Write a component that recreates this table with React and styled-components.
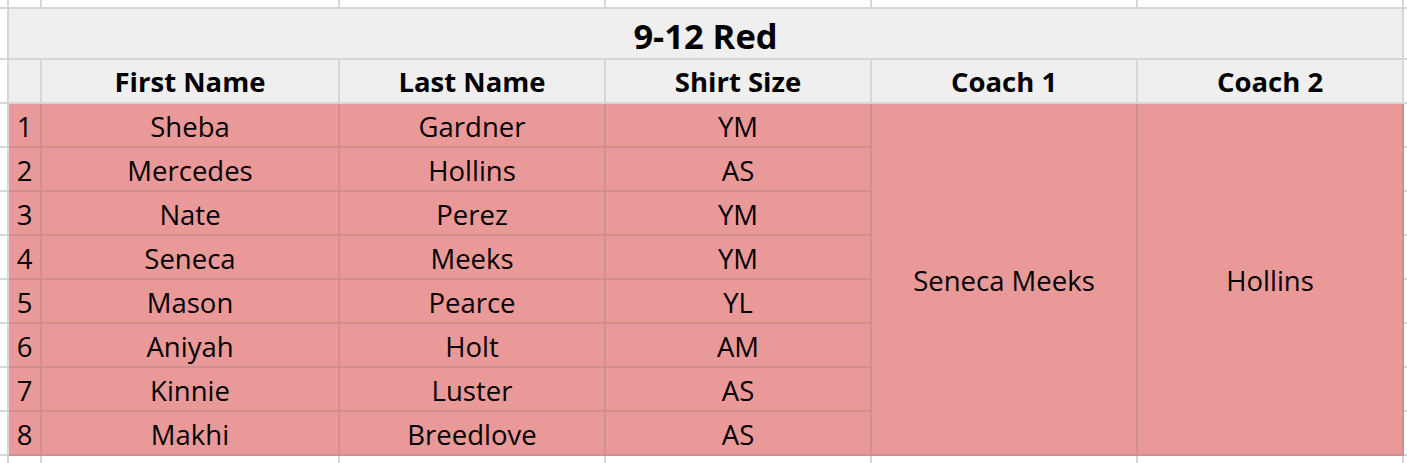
import React from "react";
import styled, { createGlobalStyle } from "styled-components";

const Global = createGlobalStyle`
  html, body { margin: 0; padding: 0; background: #ffffff; }
  body { font-family: "Open Sans", Lato, sans-serif; overflow: hidden; }
`;

const Sheet = styled.table`
  border-collapse: collapse;
  border: hidden;
  table-layout: fixed;
  width: 1407px;
  font-family: "Open Sans", Lato, sans-serif;
  color: #000;
`;

const Row = styled.tr`
  height: ${(p) => p.$h}px;
`;

const Cell = styled.td`
  padding: 3px 0 0 0;
  line-height: 1;
  border: 2px solid ${(p) => (p.$pink ? "#d08e8e" : "#d6d6d6")};
  background: ${(p) => (p.$pink ? "#ea9999" : p.$gray ? "#efefef" : "#ffffff")};
  text-align: center;
  vertical-align: middle;
  font-size: 27.5px;
  white-space: nowrap;
  overflow: hidden;
`;

const TitleCell = styled(Cell)`
  font-size: 34.5px;
  font-weight: 700;
  padding: 6px 0 0 0;
`;

const HeadCell = styled(Cell)`
  font-weight: 700;
  font-size: 27.5px;
  padding: 1px 0 0 0;
`;

const players = [
  ["Sheba", "Gardner", "YM"],
  ["Mercedes", "Hollins", "AS"],
  ["Nate", "Perez", "YM"],
  ["Seneca", "Meeks", "YM"],
  ["Mason", "Pearce", "YL"],
  ["Aniyah", "Holt", "AM"],
  ["Kinnie", "Luster", "AS"],
  ["Makhi", "Breedlove", "AS"],
];

const widths = [8, 33, 298, 266, 266, 266, 266, 4];
const blank = () => widths.map((_, i) => <Cell key={i} />);

export default function App() {
  return (
    <>
      <Global />
      <Sheet>
        <colgroup>
          {widths.map((w, i) => (
            <col key={i} style={{ width: w }} />
          ))}
        </colgroup>
        <tbody>
          <Row $h={8}>{blank()}</Row>
          <Row $h={51}>
            <Cell />
            <TitleCell $gray colSpan={6}>9-12 Red</TitleCell>
            <Cell />
          </Row>
          <Row $h={44}>
            <Cell />
            <HeadCell $gray />
            <HeadCell $gray>First Name</HeadCell>
            <HeadCell $gray>Last Name</HeadCell>
            <HeadCell $gray>Shirt Size</HeadCell>
            <HeadCell $gray>Coach 1</HeadCell>
            <HeadCell $gray>Coach 2</HeadCell>
            <Cell />
          </Row>
          {players.map((p, i) => (
            <Row $h={44} key={i}>
              <Cell />
              <Cell $pink>{i + 1}</Cell>
              <Cell $pink>{p[0]}</Cell>
              <Cell $pink>{p[1]}</Cell>
              <Cell $pink>{p[2]}</Cell>
              {i === 0 && (
                <>
                  <Cell $pink rowSpan={8}>Seneca Meeks</Cell>
                  <Cell $pink rowSpan={8}>Hollins</Cell>
                </>
              )}
              <Cell />
            </Row>
          ))}
          <Row $h={8}>{blank()}</Row>
        </tbody>
      </Sheet>
    </>
  );
}
